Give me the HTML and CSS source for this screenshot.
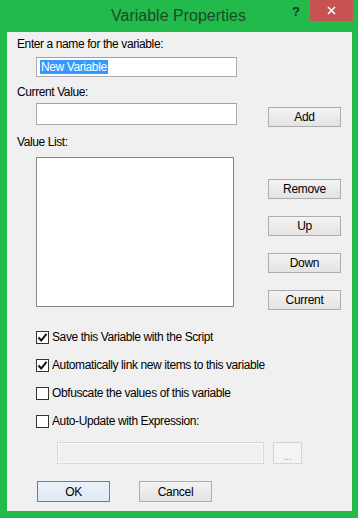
FILE: index.html
```html
<!DOCTYPE html>
<html lang="en">
<head>
  <meta charset="UTF-8" />
  <title>Variable Properties</title>
  <link rel="stylesheet" href="styles.css">
</head>
<body>

<div class="window">
  <div class="titlebar">
    <span class="title">Variable Properties</span>
    <span class="help">?</span>
    <span class="close">
      <svg width="9" height="9" viewBox="0 0 9 9"><path d="M1 1L8 8M8 1L1 8" stroke="#fff" stroke-width="1.6"/></svg>
    </span>
  </div>

  <div class="panel">
    <div class="label first">Enter a name for the variable:</div>
    <div class="textbox name-box"><span class="selected">New Variable</span></div>

    <div class="label">Current Value:</div>
    <div class="row value-row">
      <div class="textbox value-box"></div>
      <button class="btn add">Add</button>
    </div>

    <div class="label">Value List:</div>
    <div class="row list-row">
      <div class="listbox"></div>
      <div class="side-buttons">
        <button class="btn">Remove</button>
        <button class="btn">Up</button>
        <button class="btn">Down</button>
        <button class="btn">Current</button>
      </div>
    </div>

    <div class="checks">
      <label class="check"><span class="box"><svg width="11" height="11" viewBox="0 0 11 11"><path d="M1.5 5.5L4.2 8.5L9.5 1.8" fill="none" stroke="#111" stroke-width="2"/></svg></span>Save this Variable with the Script</label>
      <label class="check"><span class="box"><svg width="11" height="11" viewBox="0 0 11 11"><path d="M1.5 5.5L4.2 8.5L9.5 1.8" fill="none" stroke="#111" stroke-width="2"/></svg></span>Automatically link new items to this variable</label>
      <label class="check"><span class="box"></span>Obfuscate the values of this variable</label>
      <label class="check"><span class="box"></span>Auto-Update with Expression:</label>
    </div>

    <div class="row expr-row">
      <div class="textbox disabled"></div>
      <button class="btn dots">...</button>
    </div>

    <div class="row footer">
      <button class="btn ok">OK</button>
      <button class="btn">Cancel</button>
    </div>
  </div>
</div>

</body>
</html>
```

FILE: styles.css
```css
* {
  box-sizing: border-box;
}

body {
  margin: 0;
  font-family: 'Liberation Sans', Arial, sans-serif;
  font-size: 12px;
  color: #000;
  background: #fff;
}

.window {
  width: 358px;
  height: 518px;
  background: #21ba4b;
  padding: 0 6px 7px 7px;
  display: flex;
  flex-direction: column;
}

.titlebar {
  position: relative;
  height: 32px;
  flex-shrink: 0;
  text-align: center;
}

.title {
  display: inline-block;
  margin-top: 6px;
  margin-left: -2px;
  font-size: 16px;
  line-height: 20px;
  color: #1d4a29;
}

.help {
  position: absolute;
  left: 285px;
  top: 4px;
  font-weight: bold;
  font-size: 13px;
  color: #173a20;
}

.close {
  position: absolute;
  left: 303px;
  top: 0;
  width: 43px;
  height: 21px;
  background: #c85151;
  display: flex;
  align-items: center;
  justify-content: center;
}

.panel {
  flex: 1;
  background: #f0f0f0;
}

.label {
  padding-left: 10px;
  margin-top: 8px;
  line-height: 14px;
  letter-spacing: -0.4px;
}

.label.first {
  margin-top: 5px;
}

.textbox {
  background: #fff;
  border: 1px solid #abadb3;
  border-top-color: #9fa2aa;
}

.name-box {
  margin: 6px 0 0 29px;
  width: 201px;
  height: 20px;
  padding: 2px 3px;
  line-height: 14px;
}

.selected {
  background: #3399ff;
  color: #fff;
  letter-spacing: -0.4px;
  padding: 0 1px;
}

.row {
  display: flex;
  align-items: flex-start;
  margin-left: 29px;
}

.value-row {
  margin-top: 4px;
  gap: 31px;
}

.value-box {
  width: 201px;
  height: 22px;
}

.btn {
  width: 73px;
  height: 20px;
  padding: 0;
  font-family: inherit;
  font-size: 12px;
  letter-spacing: -0.3px;
  color: #000;
  border: 1px solid #adadad;
  border-radius: 0;
  background: linear-gradient(#f3f3f3, #e3e3e3);
}

.add {
  margin-top: 4px;
}

.list-row {
  margin-top: 8px;
  gap: 34px;
}

.listbox {
  width: 198px;
  height: 150px;
  background: #fff;
  border: 1px solid #828790;
}

.side-buttons {
  display: flex;
  flex-direction: column;
  gap: 17px;
  margin-top: 22px;
}

.checks {
  margin: 13px 0 0 29px;
  display: flex;
  flex-direction: column;
}

.check {
  height: 28px;
  display: flex;
  align-items: center;
  gap: 3px;
  letter-spacing: -0.4px;
}

.box {
  width: 13px;
  height: 13px;
  background: #fff;
  border: 1px solid #333;
  display: flex;
  align-items: center;
  justify-content: center;
}

.expr-row {
  margin: 7px 0 0 50px;
  gap: 9px;
}

.disabled {
  width: 207px;
  height: 22px;
  background: #f0f0f0;
  border: 1px solid #d9d9d9;
  box-shadow: inset 0 0 0 1px #fafafa;
}

.dots {
  width: 29px;
  height: 22px;
  background: #f4f4f4;
  border-color: #d5d5d5;
  color: #a0a0a0;
  font-size: 10px;
  padding-top: 6px;
}

.footer {
  margin: 17px 0 0 30px;
  gap: 29px;
}

.footer .btn {
  height: 21px;
}

.ok {
  border-color: #3c8bcf !important;
  background: linear-gradient(#eaf2fa, #dfeaf6);
}
```
